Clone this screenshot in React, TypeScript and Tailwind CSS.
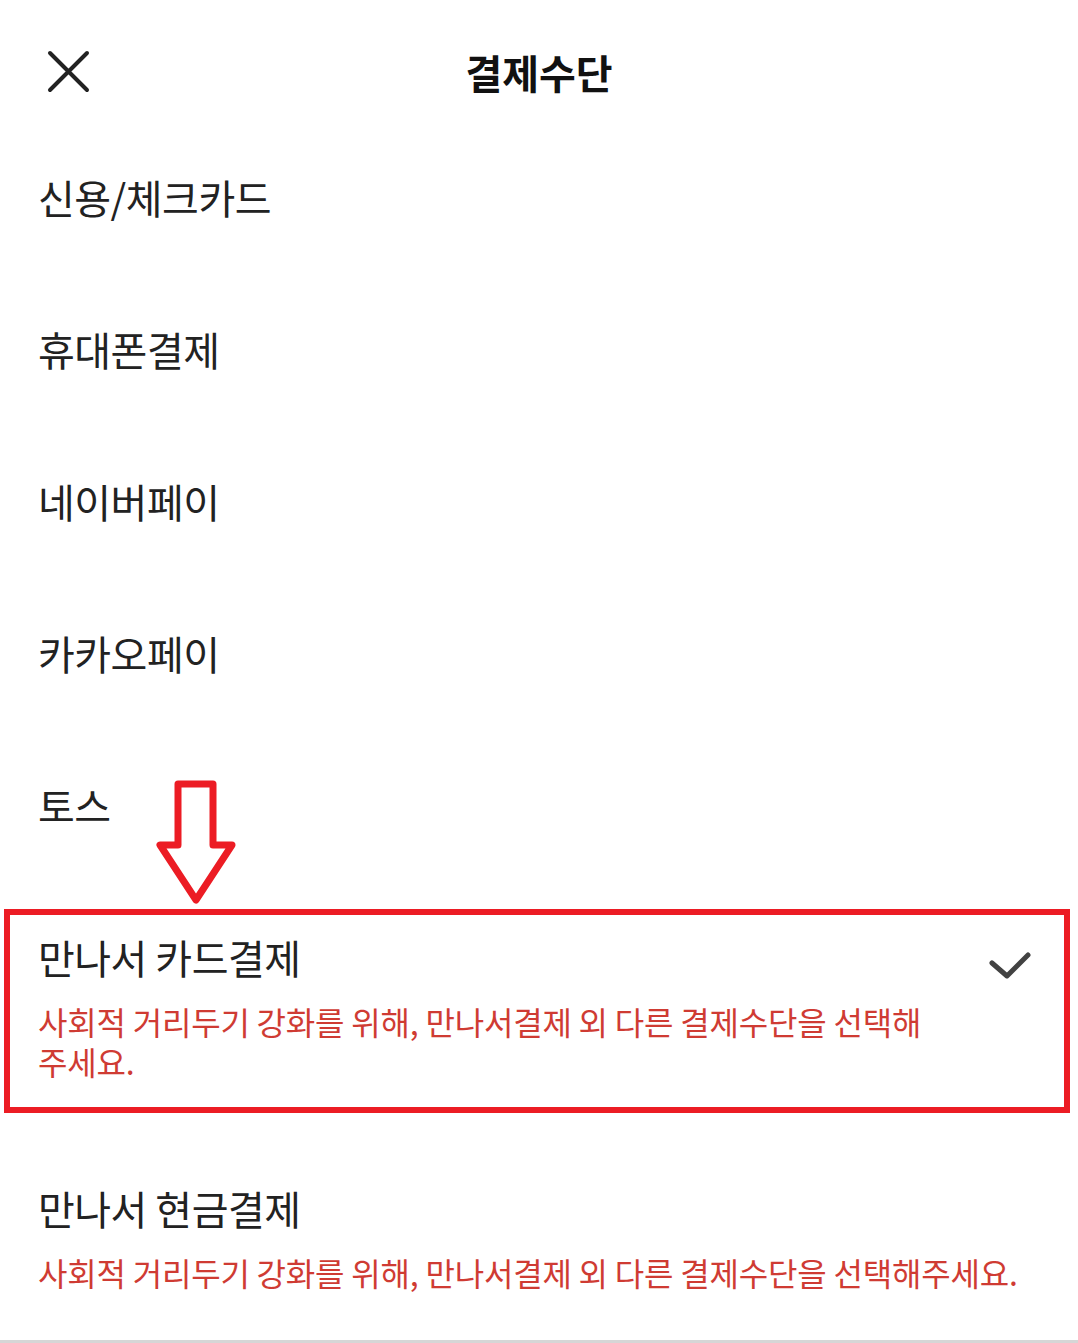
import React from 'react';

type Method = {
  name: string;
  note?: string;
  selected?: boolean;
};

const NOTE = '사회적 거리두기 강화를 위해, 만나서결제 외 다른 결제수단을 선택해주세요.';

const methods: Method[] = [
  { name: '신용/체크카드' },
  { name: '휴대폰결제' },
  { name: '네이버페이' },
  { name: '카카오페이' },
  { name: '토스' },
  { name: '만나서 카드결제', note: NOTE, selected: true },
  { name: '만나서 현금결제', note: NOTE },
];

const CloseIcon = () => (
  <svg width="48" height="48" viewBox="0 0 48 48" className="block">
    <path d="M6 5 L43 42 M43 5 L6 42" stroke="#222" strokeWidth="4" strokeLinecap="round" fill="none" />
  </svg>
);

const CheckIcon = () => (
  <svg width="48" height="40" viewBox="0 0 48 40" className="block">
    <path d="M8 20 L23 33 L44 12" stroke="#424242" strokeWidth="5" strokeLinecap="round" strokeLinejoin="round" fill="none" />
  </svg>
);

// red annotation arrow pointing down at the selected row
const DownArrow = () => (
  <svg width="90" height="130" viewBox="0 0 90 130" className="block">
    <path
      d="M26 7 L61 7 L61 68 L80 68 L44 123 L8 68 L26 68 Z"
      stroke="#ec1c24"
      strokeWidth="7"
      strokeLinejoin="round"
      fill="none"
    />
  </svg>
);

const Row: React.FC<{ m: Method }> = ({ m }) => (
  <div className={`relative flex items-start pl-[38px] pr-[46px] pt-[56px] ${m.note ? 'pb-[51px]' : 'pb-[56px]'}`}>
    <div className="flex-1 min-w-0">
      <div className="text-[40px] leading-[40px] text-[#222] tracking-[-0.5px]">{m.name}</div>
      {m.note && (
        <div className={`mt-[24px] text-[32px] leading-[40px] text-[#cf3b33] tracking-[-0.2px] ${m.selected ? 'pr-[100px]' : ''}`}>
          {m.note}
        </div>
      )}
    </div>
    {m.selected && (
      <div className="absolute right-[46px] top-[62px]">
        <CheckIcon />
      </div>
    )}
    {m.selected && (
      <>
        <div className="absolute left-[4px] right-[8px] top-[28px] bottom-[19px] border-[6px] border-[#ec1c24] pointer-events-none" />
        <div className="absolute left-[152px] top-[-104px] pointer-events-none">
          <DownArrow />
        </div>
      </>
    )}
  </div>
);

export default function App() {
  return (
    <div
      className="w-[1078px] h-[1343px] bg-white overflow-hidden flex flex-col border-b-[3px] border-[#d6d6d6]"
      style={{ fontFamily: '"Noto Sans CJK KR", "Noto Sans", sans-serif' }}
    >
      <div className="h-[121px] pt-[48px] shrink-0">
        <div className="relative h-[48px] flex items-center justify-center">
          <div className="absolute left-[44px] top-0">
            <CloseIcon />
          </div>
          <h1 className="text-[40px] font-bold text-[#111] leading-[48px]">결제수단</h1>
        </div>
      </div>
      <div className="flex flex-col shrink-0">
        {methods.map((m) => (
          <Row key={m.name} m={m} />
        ))}
      </div>
    </div>
  );
}
